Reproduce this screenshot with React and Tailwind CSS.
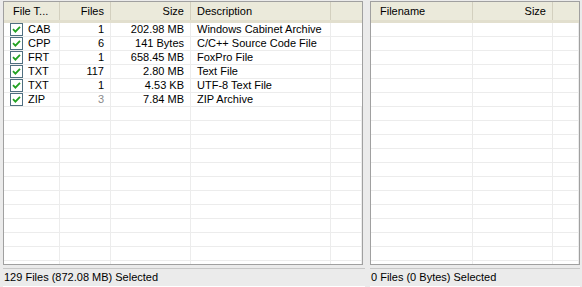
import React from "react";

const leftCols = [
  { w: "w-[56px]" },
  { w: "w-[51px]" },
  { w: "w-[80px]" },
  { w: "w-[140px]" },
  { w: "flex-1" },
];

const rows = [
  ["CAB", "1", "202.98 MB", "Windows Cabinet Archive"],
  ["CPP", "6", "141 Bytes", "C/C++ Source Code File"],
  ["FRT", "1", "658.45 MB", "FoxPro File"],
  ["TXT", "117", "2.80 MB", "Text File"],
  ["TXT", "1", "4.53 KB", "UTF-8 Text File"],
  ["ZIP", "3", "7.84 MB", "ZIP Archive", true],
];

const Check = () => (
  <span className="w-[13px] h-[13px] border border-[#4f6f80] bg-white flex items-center justify-center shrink-0">
    <svg width="9" height="9" viewBox="0 0 9 9">
      <path d="M1 4.2 L3.4 6.6 L8 1.8" stroke="#21a121" strokeWidth="1.8" fill="none" />
    </svg>
  </span>
);

const HeadCell = ({ className, children }) => (
  <div className={`${className} h-full flex items-center border-r border-[#d3d0bf] px-[6px] shrink-0`}>
    {children}
  </div>
);

const Header = ({ children }) => (
  <div className="h-[21px] flex bg-[#ebeadb] border-b-[3px] border-[#e2dfce] shrink-0">{children}</div>
);

const EmptyRow = ({ widths }) => (
  <div className="h-[14px] flex border-b border-[#ececec] shrink-0">
    {widths.map((w, i) => (
      <div key={i} className={`${w} h-full border-r border-[#ececec] shrink-0`} />
    ))}
  </div>
);

export default function App() {
  const leftWidths = leftCols.map((c) => c.w);
  const rightWidths = ["w-[102px]", "w-[80px]", "flex-1"];
  return (
    <div className="w-[582px] h-[287px] bg-[#ebebeb] flex flex-col text-[11px] text-black overflow-hidden" style={{ fontFamily: '"Liberation Sans", Arial, sans-serif' }}>
      <div className="flex h-[265px] pt-[1px] pl-[3px] pr-[2px]">
        <div className="w-[360px] h-full border border-[#a0a0a0] bg-white flex flex-col overflow-hidden">
          <Header>
            <HeadCell className="w-[56px] pl-[9px]">File T...</HeadCell>
            <HeadCell className="w-[51px] justify-end">Files</HeadCell>
            <HeadCell className="w-[80px] justify-end">Size</HeadCell>
            <HeadCell className="w-[140px]">Description</HeadCell>
            <div className="flex-1" />
          </Header>
          {rows.map((r, i) => (
            <div key={i} className="h-[14px] flex border-b border-[#ececec] shrink-0 leading-[13px]">
              <div className="w-[56px] h-full border-r border-[#ececec] flex items-center gap-[5px] pl-[6px] shrink-0">
                <Check />
                <span>{r[0]}</span>
              </div>
              <div className={`w-[51px] h-full border-r border-[#ececec] flex items-center justify-end pr-[6px] shrink-0 ${r[4] ? "text-[#8a8a8a]" : ""}`}>
                {r[1]}
              </div>
              <div className="w-[80px] h-full border-r border-[#ececec] flex items-center justify-end pr-[6px] shrink-0">{r[2]}</div>
              <div className="w-[140px] h-full border-r border-[#ececec] flex items-center pl-[6px] shrink-0 whitespace-nowrap">{r[3]}</div>
              <div className="flex-1" />
            </div>
          ))}
          {Array.from({ length: 14 }).map((_, i) => (
            <EmptyRow key={i} widths={leftWidths} />
          ))}
        </div>
        <div className="w-[7px] shrink-0" />
        <div className="w-[210px] h-full border border-[#a0a0a0] bg-white flex flex-col overflow-hidden">
          <Header>
            <HeadCell className="w-[102px] pl-[9px]">Filename</HeadCell>
            <HeadCell className="w-[80px] justify-end">Size</HeadCell>
            <div className="flex-1" />
          </Header>
          {Array.from({ length: 20 }).map((_, i) => (
            <EmptyRow key={i} widths={rightWidths} />
          ))}
        </div>
      </div>
      <div className="flex flex-1 pt-[3px] pb-[3px] pl-[3px] pr-[2px] gap-[5px]">
        <div className="w-[362px] border-t border-[#c8c8c8] border-b border-b-white flex items-center pl-[1px]">
          129 Files (872.08 MB) Selected
        </div>
        <div className="flex-1 border-t border-[#c8c8c8] border-b border-b-white flex items-center pl-[1px]">
          0 Files (0 Bytes) Selected
        </div>
      </div>
    </div>
  );
}
